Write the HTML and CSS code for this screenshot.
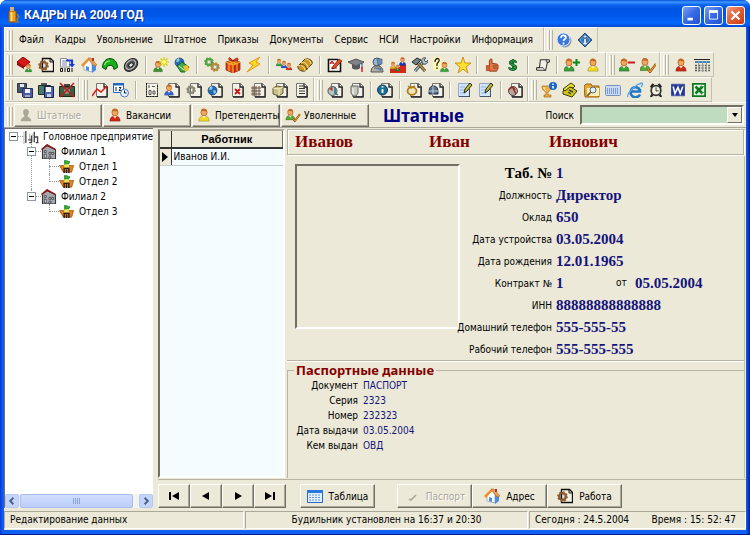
FILE: index.html
```html
<!DOCTYPE html>
<html lang="ru">
<head>
<meta charset="utf-8">
<title>КАДРЫ НА 2004 ГОД</title>
<link rel="stylesheet" href="styles.css">
</head>
<body>
<svg class="sprite" aria-hidden="true">
  <symbol id="doc" viewBox="0 0 16 16"><path d="M4.500 1.500h8l3 3v10h-11z" fill="#f4f1e6" stroke="#777"/><path d="M12 1.500v3.500h3.500M15 5v10H5" fill="none" stroke="#222" stroke-width="1.300"/></symbol>
  <symbol id="person" viewBox="0 0 16 16"><path d="M2 15c0-4 2-6 6-6s6 2 6 6z" fill="currentColor" stroke="#00000060" stroke-width=".6"/><path d="M6 9l2 3 2-3z" fill="#fff3d0"/><ellipse cx="8" cy="5" rx="3.500" ry="4" fill="#f2a860" stroke="#a8581c" stroke-width=".8"/><path d="M4.500 4C5 1 7 .7 8.500 1c2 .2 3 1.500 3 3C9 4 7 2.500 4.500 4z" fill="#c46a20"/></symbol>
  <symbol id="person-off" viewBox="0 0 16 16"><path d="M2 15c0-3 2-4 4-5V8C4 6 4 1 8 1s4 5 2 7v2c2 1 4 2 4 5z" fill="#aca899"/></symbol>
  <symbol id="gear" viewBox="0 0 16 16"><circle cx="8" cy="8" r="5" fill="none" stroke="currentColor" stroke-width="3"/><circle cx="8" cy="8" r="6.800" fill="none" stroke="currentColor" stroke-width="2" stroke-dasharray="2.600 2.700"/><circle cx="8" cy="8" r="3" fill="none" stroke="#0008" stroke-width=".8"/></symbol>
  <symbol id="globe" viewBox="0 0 16 16"><circle cx="8" cy="8" r="6.500" fill="#2469b8" stroke="#123a70"/><path d="M4 4c3-3 5-1 4 1S4 8 3 7zM9 8c3-1 5 0 4 3s-4 2-4-3z" fill="#7bc8d8"/><path d="M4 4l3-2" stroke="#fff"/></symbol>
  <symbol id="people-book" viewBox="0 0 16 16"><path d="M0 5l6-5 7 5-6 5z" fill="#d81818" stroke="#800"/><path d="M0 5v3l7 4v-2z" fill="#9a0c0c"/><use href="#person" x="7" y="6" width="9" height="10" color="#38a038"/></symbol>
  <symbol id="gear-doc" viewBox="0 0 16 16"><path d="M4.500 1.500h8l3 3v10h-11z" fill="#f4f1e6" stroke="#111" stroke-width="1.300"/><path d="M12 1.500V5h3.500" fill="none" stroke="#111"/><use href="#gear" x="0" y="3" width="11" height="11" color="#8b5a2b"/></symbol>
  <symbol id="gear-doc-gray" viewBox="0 0 16 16"><use href="#doc" width="16" height="16"/><use href="#gear" x="0" y="3" width="10" height="10" color="#8f8a78"/></symbol>
  <symbol id="binary" viewBox="0 0 16 16"><path d="M1.500 1.500h6l3 3V10h-9z" fill="#fff" stroke="#889"/><path d="M3 4h4M3 6h5M3 8h5" stroke="#78a"/><path d="M7 3.500h6V8" fill="none" stroke="#1438d0" stroke-width="2.200"/><path d="M10 7h6l-3 3.500z" fill="#1438d0"/><path d="M1.500 11.500h2v3h-2zM6 11v4M8.500 11.500h2v3h-2zM13 11v4" fill="none" stroke="#111"/></symbol>
  <symbol id="house" viewBox="0 0 16 16"><path d="M3 8l5-5 3 4v8l-8-2z" fill="#fff" stroke="#89a" stroke-width=".7"/><path d="M11 7l4 1v5l-4 3z" fill="#4a8de0"/><path d="M0 8l7-7 2 1-7 8z" fill="#f09030"/><path d="M7 1h3l6 7-3 1z" fill="#f0a050" stroke="#a85810" stroke-width=".5"/><path d="M5 9l3 1v4l-3-1z" fill="#4a8de0"/><path d="M11 1h2v3h-2z" fill="#a33"/></symbol>
  <symbol id="handset" viewBox="0 0 16 16"><path d="M.5 10.500C.5 5 4 1.500 8 1.500s7.500 3.500 7.500 9L12 12.500l-1-3c-1-1.500-5-1.500-6 0l-1 3z" fill="#18b018" stroke="#064c06"/><path d="M2.500 8c1-3 3-4 5.500-4" stroke="#90f090" fill="none" stroke-width="1.200"/></symbol>
  <symbol id="ring" viewBox="0 0 16 16"><g transform="rotate(-40 8 8)"><ellipse cx="8" cy="8" rx="7.500" ry="5.500" fill="#555" stroke="#222"/><ellipse cx="8" cy="7.500" rx="5.500" ry="3.800" fill="none" stroke="#ccc"/><ellipse cx="8" cy="8" rx="2.500" ry="1.700" fill="#eee" stroke="#222"/></g></symbol>
  <symbol id="person-star" viewBox="0 0 16 16"><use href="#person" x="-1" y="3" width="12" height="13" color="#38922c"/><path d="M11 0v10M6 5h10M7.500 1.500l7 7M14.500 1.500l-7 7" stroke="#d8c800" stroke-width="1.200"/><circle cx="11" cy="5" r="2" fill="#ffff60"/></symbol>
  <symbol id="globe-hand" viewBox="0 0 16 16"><use href="#globe" width="11" height="11"/><path d="M3 9l5-4 7 5-4 5H7z" fill="#40a850" stroke="#145a24"/><path d="M9 9l5-1 1 5-4 2z" fill="#f0c030"/><path d="M5 9l5 4" stroke="#c0f0d0"/></symbol>
  <symbol id="gears" viewBox="0 0 16 16"><use href="#gear" width="10" height="10" color="#48a838"/><use href="#gear" x="6" y="5" width="10" height="10" color="#b58c30"/></symbol>
  <symbol id="gift" viewBox="0 0 16 16"><path d="M1 5l7-2 7 2v8l-7 3-7-3z" fill="#e04020" stroke="#802010" stroke-width=".7"/><path d="M8 8v8l7-3V5z" fill="#b82c14"/><path d="M1 5l7 3 7-3M8 8v8M4 4l8 3v7M12 4L4 7v7" fill="none" stroke="#f8b020" stroke-width="1.200"/><path d="M8 4C3 4 3 0 5 1l3 3c3-4 6-3 5-1-1 1-3 1-5 1z" fill="#e84820" stroke="#982010"/></symbol>
  <symbol id="bolt" viewBox="0 0 16 16"><path d="M14 0L3 6l4 2-6 7 13-8-4-2z" fill="#ffd820" stroke="#e08800" stroke-width=".8"/></symbol>
  <symbol id="team" viewBox="0 0 16 16"><use href="#person" x="-1" y="0" width="8" height="11" color="#30a030"/><use href="#person" x="4" y="2" width="8" height="11" color="#2450d0"/><use href="#person" x="9" y="4" width="8" height="11" color="#d83018"/></symbol>
  <symbol id="cards" viewBox="0 0 16 16"><path d="M1 9l7-7c5-1 8 2 7 5l-7 7c-4 1-8-2-7-5z" fill="#c8982c" stroke="#5a3c08"/><path d="M1 9c3-2 7 1 7 5M4 6c3-2 7 1 7 5M8 2c3 0 6 2 6 5" fill="none" stroke="#ffe890"/><path d="M3 8c3-2 6 1 7 5" fill="none" stroke="#704c10"/></symbol>
  <symbol id="doc-pen-red" viewBox="0 0 16 16"><path d="M2.500 2.500h9l3 3v9h-12z" fill="#fff" stroke="#111" stroke-width="1.600"/><path d="M4 7l2-3 2 3M4 6h4M5 11h6" stroke="#c00" fill="none"/><path d="M7 9l6-7 3 2-7 7-3 1z" fill="#d85028" stroke="#701808" stroke-width=".7"/></symbol>
  <symbol id="cap" viewBox="0 0 16 16"><path d="M0 5l8-3 8 3-8 4z" fill="#808488" stroke="#333" stroke-width=".7"/><path d="M4 7v4c2 2 6 2 8 0V7L8 9z" fill="#55585c"/><path d="M14 6v6" stroke="#24c"/><path d="M14 10v5" stroke="#d22" stroke-width="1.500"/></symbol>
  <symbol id="agent" viewBox="0 0 16 16"><circle cx="8" cy="5" r="4" fill="#9db8cc" stroke="#456"/><path d="M2 15c0-5 3-6 6-6 4 0 6 2 6 6z" fill="#b0b0a4" stroke="#555"/><path d="M8 2h5v5l-4 1zM5 11h7v3" fill="#668fbd" stroke="#456" stroke-width=".6"/></symbol>
  <symbol id="ranks" viewBox="0 0 16 16"><path d="M0 16v-4h5V10h5V8h6v8z" fill="#d82818"/><use href="#person" x="-1" y="4" width="8" height="9" color="#e0a010"/><use href="#person" x="4" y="7" width="7" height="8" color="#208830"/><use href="#person" x="8" y="-1" width="9" height="11" color="#1838b8"/></symbol>
  <symbol id="tools" viewBox="0 0 16 16"><path d="M3 14L12 4" stroke="#333" stroke-width="3"/><path d="M3 14L12 4" stroke="#9cc4d0" stroke-width="1.500"/><path d="M4 4l9 10" stroke="#444" stroke-width="3"/><path d="M6 6l7 8" stroke="#c89038" stroke-width="1.500"/><path d="M0 5l5-4 4 2-5 5z" fill="#6c8490" stroke="#222"/><path d="M10 5c-1-3 1-5 4-4l-2 2 2 2 2-2c0 3-2 5-5 4z" fill="#a8c4cc" stroke="#222" stroke-width=".7"/></symbol>
  <symbol id="person-ask" viewBox="0 0 16 16"><rect x="0" y="0" width="8" height="13" rx="2" fill="#fff8b0"/><path d="M2 5c0-5 5-4 4-1L4 7v2M4 10.500v1.500" fill="none" stroke="#222" stroke-width="1.300"/><use href="#person" x="6" y="4" width="11" height="12" color="#38a038"/></symbol>
  <symbol id="star" viewBox="0 0 16 16"><path d="M8 0l2 6h6l-5 4 2 6-5-4-5 4 2-6-5-4h6z" fill="#ffe030" stroke="#c08000" stroke-width=".8"/></symbol>
  <symbol id="thumb" viewBox="0 0 16 16"><path d="M5 8V3c1-3 4-2 3 0v3l6 1c2 1 1 7-1 8H5z" fill="#e07848" stroke="#8c3010"/><path d="M9 9h5M9 11.500h5" stroke="#943818"/><path d="M1 8h4v7H1z" fill="#c86038"/></symbol>
  <symbol id="dollar" viewBox="0 0 16 16"><path d="M12 5c0-4-8-3-8 0 0 4 8 2 8 6 0 4-9 4-9 0M8 0v16" fill="none" stroke="#0c3c14" stroke-width="3"/><path d="M12 5c0-4-8-3-8 0 0 4 8 2 8 6 0 4-9 4-9 0M8 0v16" fill="none" stroke="#20a040" stroke-width="1.400"/></symbol>
  <symbol id="scroll" viewBox="0 0 16 16"><path d="M5 2h9c2 0 2 3 0 3h-1l-2 9H2c-2 0-2-3 0-3h2z" fill="#f4f0e4" stroke="#333" stroke-width="1.200"/><path d="M13 2c-2 0-2 3 0 3M4 11h4c1 1 1 3 3 3" fill="none" stroke="#333"/></symbol>
  <symbol id="person-add" viewBox="0 0 16 16"><use href="#person" x="-2" y="1" width="14" height="14" color="#38a038"/><path d="M12.500 2v7M9 5.500h7" stroke="#0a8a1a" stroke-width="2"/></symbol>
  <symbol id="person-del" viewBox="0 0 16 16"><use href="#person" x="-2" y="1" width="14" height="14" color="#38a038"/><path d="M9 5.500h7" stroke="#d01818" stroke-width="2"/></symbol>
  <symbol id="person-mark" viewBox="0 0 16 16"><use href="#person" x="-2" y="0" width="14" height="15" color="#58a838"/><path d="M8 12l2 3 6-8" fill="none" stroke="#8a4810" stroke-width="2.200"/><path d="M8 12l2 3 6-8" fill="none" stroke="#ffb020" stroke-width="1"/></symbol>
  <symbol id="table" viewBox="0 0 16 16"><path d="M0 2.500h16" stroke="#222"/><path d="M1 5h15" stroke="#48b" stroke-width="2" stroke-dasharray="3 1"/><path d="M1 8.500h15M1 11h15M1 13.500h15" stroke="#555" stroke-width="1.300" stroke-dasharray="2 1.300"/><path d="M4.500 4v11M8.500 4v11M12.500 4v11" stroke="#999"/></symbol>
  <symbol id="floppy" viewBox="0 0 16 16"><path d="M.5 1.500h9v9h-9z" fill="#48586c" stroke="#334"/><path d="M3 2h4v3H3z" fill="#e8e8e8"/><path d="M5.500 6.500h10v9h-9l-1-1z" fill="#4c5ca4" stroke="#26305c"/><path d="M8 7h5v4H8z" fill="#f4f4f4"/><path d="M8 13h5v2H8z" fill="#aab"/></symbol>
  <symbol id="floppy-case" viewBox="0 0 16 16"><path d="M.5 3.500h12v9H.5z" fill="#4c7868" stroke="#1c3428"/><path d="M3 1h6v2H3z" fill="#555"/><path d="M6.500 4.500h9v11h-9z" fill="#5068b0" stroke="#16204c"/><path d="M8 5h5v5H8z" fill="#f4f4f4"/><path d="M9 12h4v3H9z" fill="#ccd"/></symbol>
  <symbol id="case-del" viewBox="0 0 16 16"><path d="M.5 4.500h15v10H.5z" fill="#3c5c44" stroke="#182c1c"/><path d="M5 2h6v2H5z" fill="#444"/><circle cx="8" cy="9" r="3" fill="#8a9a88"/><path d="M1 1l14 14M15 1L1 15" stroke="#c01818" stroke-width="1.500"/></symbol>
  <symbol id="doc-graph" viewBox="0 0 16 16"><use href="#doc" width="16" height="16"/><path d="M0 14l5-7 4 3 6-6" fill="none" stroke="#e01818" stroke-width="1.500"/></symbol>
  <symbol id="calendar" viewBox="0 0 16 16"><path d="M.5 1.500h10v9H.5z" fill="#fff" stroke="#2468c0"/><path d="M0 1h11v2.500H0z" fill="#2468c0"/><path d="M3 5v4M6 5.500h2L6 8.500h3" fill="none" stroke="#124"/><circle cx="11.500" cy="11" r="4" fill="#e4f0ff" stroke="#5878b8"/><path d="M11.500 8.500V11h2" fill="none" stroke="#124"/></symbol>
  <symbol id="doc-code" viewBox="0 0 16 16"><path d="M3.500 1.500h11v13h-11z" fill="#f4f1e6" stroke="#999"/><path d="M3.500 1v14M14.500 3v12M4 14.500h11" stroke="#222" stroke-dasharray="2 .6"/><path d="M6 3v3M9 4.500h3M6 8.500h2v4H6zM10 9h2v3h-2z" stroke="#555" fill="none"/></symbol>
  <symbol id="doc-person" viewBox="0 0 16 16"><use href="#doc" width="16" height="16"/><use href="#person" x="-1" y="1" width="12" height="14" color="#3464d0"/></symbol>
  <symbol id="doc-globe" viewBox="0 0 16 16"><use href="#doc" width="16" height="16"/><use href="#globe" x="0" y="3" width="11" height="11"/></symbol>
  <symbol id="doc-del" viewBox="0 0 16 16"><use href="#doc" x="-1" width="16" height="16"/><path d="M6 7l5 5M11 7l-5 5" stroke="#c81818" stroke-width="1.800"/></symbol>
  <symbol id="doc-grid" viewBox="0 0 16 16"><use href="#doc" width="16" height="16"/><path d="M1 6h10M1 9h10M1 12h10M3 4v10M6 4v10M9 4v10" stroke="#6a5440"/></symbol>
  <symbol id="doc-cube" viewBox="0 0 16 16"><use href="#doc" width="16" height="16"/><path d="M1 6l4-2 6 1v6l-4 3-6-2z" fill="#c8c088" stroke="#665c30"/><path d="M1 6l6 1 4-2M7 7v7" fill="none" stroke="#f4f0c8"/></symbol>
  <symbol id="doc-text" viewBox="0 0 16 16"><use href="#doc" x="-1" width="16" height="16"/><path d="M6 4h4M6 6.500h6M6 9h6M6 11.500h6" stroke="#333"/></symbol>
  <symbol id="doc-chart" viewBox="0 0 16 16"><use href="#doc" width="16" height="16"/><circle cx="5.500" cy="9" r="4.500" fill="#b8c8c0" stroke="#455"/><path d="M5.500 9V4.500L2 7z" fill="#c03030"/><path d="M8 5v6l3 2" stroke="#287080" fill="none" stroke-width="1.500"/></symbol>
  <symbol id="doc-cup" viewBox="0 0 16 16"><use href="#doc" width="16" height="16"/><path d="M3 4h7v7l-2 3H5l-2-3z" fill="#c8c8c0" stroke="#666"/><path d="M5 6v6" stroke="#fff"/></symbol>
  <symbol id="doc-info" viewBox="0 0 16 16"><use href="#doc" width="16" height="16"/><circle cx="5.500" cy="8" r="5" fill="#187098" stroke="#0c3c58"/><path d="M5.500 4v1.500M5.500 7v4" stroke="#fff" stroke-width="1.800"/></symbol>
  <symbol id="doc-ring" viewBox="0 0 16 16"><use href="#doc" width="16" height="16"/><ellipse cx="6" cy="9" rx="4.500" ry="3.800" fill="#eee4b8" stroke="#b07818" stroke-width="1.800"/><path d="M2 4l3 2 4-2" stroke="#b07818" fill="none" stroke-width="1.500"/></symbol>
  <symbol id="doc-bell" viewBox="0 0 16 16"><use href="#doc" width="16" height="16"/><path d="M1 12c0-6 1-8 4.500-8S10 6 10 12z" fill="#58708c" stroke="#1c2c40"/><path d="M1 9h9M5 4v9" stroke="#c0d0e0"/></symbol>
  <symbol id="doc-pencil" viewBox="0 0 16 16"><path d="M1.500 1.500h11v13h-11z" fill="#d0e4fc" stroke="#98a8c8"/><path d="M3 5h5M3 8h4M3 11h5" stroke="#98b4dc"/><path d="M12.500 15V7M2 14.500h11" stroke="#456"/><path d="M7 11l1-4 5-6 2 2-5 6z" fill="#c8c020" stroke="#222"/></symbol>
  <symbol id="doc-red" viewBox="0 0 16 16"><use href="#doc" width="16" height="16"/><circle cx="6" cy="9" r="4.500" fill="#b8a8a0" stroke="#544"/><path d="M2 8c2-4 5-3 6 0M6 6l3 6" fill="none" stroke="#983030" stroke-width="1.600"/></symbol>
  <symbol id="trophy" viewBox="0 0 16 16"><path d="M1 4h10c0 4-3 5-4 6v3h3v2H3v-2h2v-3C3 9 1 8 1 4z" fill="#f0b048" stroke="#a06818" stroke-width=".7"/><path d="M3 5c0 2 1 3 2 4" stroke="#fff0b0" fill="none"/><circle cx="12" cy="4" r="4" fill="#1868c8"/><path d="M12 1.500V3M12 4v2.500" stroke="#fff" stroke-width="1.500"/></symbol>
  <symbol id="phone" viewBox="0 0 16 16"><path d="M1 9l6-5 8 5-5 6-9-3z" fill="#d0c818" stroke="#3c3800"/><path d="M1 7l8-6 4 3-2 2-3-1-5 4z" fill="#e8e030" stroke="#3c3800"/><path d="M7 8l4 2M6 10l3 2" stroke="#444" stroke-width="1.500"/></symbol>
  <symbol id="folder-find" viewBox="0 0 16 16"><path d="M0 4l2-2h5l1 2h7v11H1z" fill="#e4a838" stroke="#98600c"/><path d="M3 6h12v8H3z" fill="#fff0b8"/><circle cx="9" cy="8" r="3" fill="#d8f0ff" stroke="#667"/><path d="M7 10l-4 4" stroke="#864" stroke-width="1.800"/></symbol>
  <symbol id="keyboard" viewBox="0 0 16 16"><rect x=".5" y="3.500" width="15" height="10" rx="1" fill="#c8daf4" stroke="#7890c0"/><path d="M2 7h12M2 9h12M2 11h12" stroke="#3858a8" stroke-dasharray="1 1"/></symbol>
  <symbol id="browser" viewBox="0 0 16 16"><path d="M13 12.500A5 5 0 1 1 13 8v1.500H4" fill="none" stroke="#2078c8" stroke-width="2.600"/><path d="M1 15c-2-3 8-13 14-14 1 1 0 3-1 4" fill="none" stroke="#58a8e8" stroke-width="1.300"/></symbol>
  <symbol id="clock" viewBox="0 0 16 16"><path d="M2 5l3-4M14 5l-3-4M4 13l-2 3M12 13l2 3" stroke="#222" stroke-width="2.500"/><circle cx="8" cy="8.500" r="5.500" fill="#f8f4e0" stroke="#333" stroke-width="2"/><path d="M8 5v4h3" fill="none" stroke="#222"/></symbol>
  <symbol id="word" viewBox="0 0 16 16"><path d="M.5 1.500h15v13H.5z" fill="#fff" stroke="#1c2c84"/><path d="M1 2h14v12H1z" fill="#24389c"/><path d="M2.500 4l2 8L8 5l2.500 7L13.500 4" fill="none" stroke="#fff" stroke-width="1.800"/></symbol>
  <symbol id="excel" viewBox="0 0 16 16"><path d="M0 0h16v16H0z" fill="#107820"/><path d="M2 2h12v12H2z" fill="#e8f8e8"/><path d="M4 4l8 8M12 4l-8 8" stroke="#107820" stroke-width="3"/><path d="M9 4h5M10 11h4" stroke="#38a048"/></symbol>
  <symbol id="help" viewBox="0 0 16 16"><circle cx="9" cy="9" r="6.500" fill="#8a9ab4"/><circle cx="7.500" cy="7.500" r="6.500" fill="#3c78d8" stroke="#d8e4fc"/><path d="M5 6c0-4 5-3 5-.5C10 7 7.500 7 7.500 9M7.500 10.500v2" fill="none" stroke="#fff" stroke-width="1.700"/></symbol>
  <symbol id="about" viewBox="0 0 16 16"><path d="M8 1l7 7-7 7-7-7z" fill="#3c74b0" stroke="#24487c"/><path d="M8 3l5 5-5 5-5-5z" fill="none" stroke="#8cb4dc" stroke-width=".7"/><path d="M8 4v1.500M8 7v4.500M6.500 11.500h3" stroke="#fff" stroke-width="1.500"/></symbol>
  <symbol id="city" viewBox="0 0 16 16"><path d="M2.500 15V2M5 11.500h3M8.500 15V7M6 14.500h3M11.500 14V3M11 8.500h4V15M13 14.500h3" fill="none" stroke="#444" stroke-width="1.400"/><path d="M.5 3v13M6.500 5v6M10 5v9" stroke="#aaa"/></symbol>
  <symbol id="branch" viewBox="0 0 16 16"><path d="M1 5l5-3 9 4v10H1z" fill="#a4a8b0" stroke="#222"/><path d="M0 6l6-5 9 5" fill="none" stroke="#901818" stroke-width="1.800"/><path d="M3 7h2v2H3zM3 11h2v4H3zM8 9h2v2H8zM11 9h2v2h-2zM8 13h2v2H8z" fill="#eee" stroke="#222" stroke-width=".7"/></symbol>
  <symbol id="dept" viewBox="0 0 16 16"><path d="M0 7h15l-2 7H4z" fill="#e88020" stroke="#8c4408" stroke-width=".7"/><path d="M5 5h5v4H5z" fill="#e4e860"/><path d="M5.500 1v5M6 2c2-1 3 1 5 1l-1 2H6z" stroke="#289028" fill="#38b038"/><path d="M5 15v-5h5v5M7.500 11v4" fill="none" stroke="#222" stroke-width="1.500"/></symbol>
  <symbol id="grid-blue" viewBox="0 0 16 16"><path d="M.5 2.500h15v12H.5z" fill="#e4f0ff" stroke="#2868c8"/><path d="M0 2h16v3H0z" fill="#2878e0"/><path d="M2 7h12M2 9.500h12M2 12h12" stroke="#6498dc" stroke-dasharray="2 1"/></symbol>
  <symbol id="app" viewBox="0 0 16 16"><path d="M4 4h7v11H4z" fill="#f0a020" stroke="#985008"/><path d="M5 0h4v4H5z" fill="#d0b080"/><path d="M6.500 5v9" stroke="#fff090" stroke-width="1.500"/><path d="M12 7l2 3-2 2 1 3h-3" fill="none" stroke="#8a7c50" stroke-width="1.500"/></symbol>
</svg>

<div class="window">
  <header class="titlebar">
    <svg class="icon"><use href="#app"/></svg>
    <h1>КАДРЫ НА 2004 ГОД</h1>
    <div class="controls">
      <button class="wbtn" aria-label="Свернуть"><svg viewBox="0 0 19 19"><path d="M5 13.500h6" stroke="#fff" stroke-width="3"/></svg></button>
      <button class="wbtn" aria-label="Развернуть"><svg viewBox="0 0 19 19"><path d="M5 5.500h9v8H5z" fill="none" stroke="#fff"/><path d="M4.500 5h10" stroke="#fff" stroke-width="3"/></svg></button>
      <button class="wbtn close" aria-label="Закрыть"><svg viewBox="0 0 19 19"><path d="M5 5l9 9M14 5l-9 9" stroke="#fff" stroke-width="2.300"/></svg></button>
    </div>
  </header>

  <div class="client">
    <div class="bar">
      <nav class="band menu">
        <a href="#">Файл</a><a href="#">Кадры</a><a href="#">Увольнение</a><a href="#">Штатное</a><a href="#">Приказы</a><a href="#">Документы</a><a href="#">Сервис</a><a href="#">НСИ</a><a href="#">Настройки</a><a href="#">Информация</a>
      </nav>
      <div class="band">
        <button class="tool"><svg><use href="#help"/></svg></button>
        <button class="tool"><svg><use href="#about"/></svg></button>
      </div>
    </div>

    <div class="bar">
      <div class="band w-staff">
        <button class="tool"><svg><use href="#people-book"/></svg></button>
        <button class="tool"><svg><use href="#gear-doc"/></svg></button>
        <button class="tool"><svg><use href="#binary"/></svg></button>
        <button class="tool"><svg><use href="#house"/></svg></button>
        <button class="tool"><svg><use href="#handset"/></svg></button>
        <button class="tool"><svg><use href="#ring"/></svg></button>
        <i class="sep"></i>
        <button class="tool"><svg><use href="#person-star"/></svg></button>
        <button class="tool"><svg><use href="#globe-hand"/></svg></button>
        <i class="sep"></i>
        <button class="tool"><svg><use href="#gears"/></svg></button>
        <button class="tool"><svg><use href="#gift"/></svg></button>
        <button class="tool"><svg><use href="#bolt"/></svg></button>
        <i class="sep"></i>
        <button class="tool"><svg><use href="#team"/></svg></button>
        <button class="tool"><svg><use href="#cards"/></svg></button>
        <i class="sep"></i>
        <button class="tool"><svg><use href="#doc-pen-red"/></svg></button>
        <button class="tool"><svg><use href="#cap"/></svg></button>
        <button class="tool"><svg><use href="#agent"/></svg></button>
        <button class="tool"><svg><use href="#ranks"/></svg></button>
        <button class="tool"><svg><use href="#tools"/></svg></button>
        <button class="tool"><svg><use href="#person-ask"/></svg></button>
        <button class="tool"><svg><use href="#star"/></svg></button>
        <i class="sep"></i>
        <button class="tool"><svg class="slim"><use href="#thumb"/></svg></button>
        <button class="tool"><svg class="small"><use href="#dollar"/></svg></button>
        <i class="sep"></i>
        <button class="tool"><svg class="slim"><use href="#scroll"/></svg></button>
        <i class="sep"></i>
        <button class="tool"><svg><use href="#person-add"/></svg></button>
        <button class="tool yellow"><svg class="slim"><use href="#person"/></svg></button>
      </div>
      <div class="band">
        <button class="tool"><svg><use href="#person-del"/></svg></button>
        <button class="tool"><svg><use href="#person-mark"/></svg></button>
      </div>
      <div class="band">
        <button class="tool red"><svg class="slim"><use href="#person"/></svg></button>
        <button class="tool"><svg><use href="#table"/></svg></button>
      </div>
    </div>

    <div class="bar">
      <div class="band">
        <button class="tool"><svg><use href="#floppy"/></svg></button>
        <button class="tool"><svg><use href="#floppy-case"/></svg></button>
        <button class="tool"><svg><use href="#case-del"/></svg></button>
      </div>
      <div class="band w-docs">
        <button class="tool"><svg><use href="#doc-graph"/></svg></button>
        <button class="tool"><svg><use href="#calendar"/></svg></button>
        <i class="sep"></i>
        <button class="tool"><svg><use href="#doc-code"/></svg></button>
        <button class="tool"><svg><use href="#doc-person"/></svg></button>
        <button class="tool"><svg><use href="#gear-doc-gray"/></svg></button>
        <button class="tool"><svg><use href="#doc-globe"/></svg></button>
        <button class="tool"><svg><use href="#doc-del"/></svg></button>
        <button class="tool"><svg><use href="#doc-grid"/></svg></button>
        <button class="tool"><svg><use href="#doc-cube"/></svg></button>
        <button class="tool"><svg><use href="#doc-text"/></svg></button>
      </div>
      <div class="band w-orders">
        <button class="tool"><svg><use href="#doc-chart"/></svg></button>
        <button class="tool"><svg><use href="#doc-cup"/></svg></button>
        <i class="sep"></i>
        <button class="tool"><svg><use href="#doc-info"/></svg></button>
        <i class="sep"></i>
        <button class="tool"><svg><use href="#doc-ring"/></svg></button>
        <button class="tool"><svg><use href="#doc-bell"/></svg></button>
        <i class="sep"></i>
        <button class="tool"><svg><use href="#doc-pencil"/></svg></button>
        <button class="tool"><svg><use href="#doc-pencil"/></svg></button>
        <i class="sep"></i>
        <button class="tool"><svg><use href="#doc-red"/></svg></button>
      </div>
      <div class="band w-extra">
        <button class="tool"><svg><use href="#trophy"/></svg></button>
        <button class="tool"><svg><use href="#phone"/></svg></button>
        <button class="tool"><svg><use href="#folder-find"/></svg></button>
        <button class="tool"><svg><use href="#keyboard"/></svg></button>
        <button class="tool"><svg><use href="#browser"/></svg></button>
        <button class="tool"><svg class="slim"><use href="#clock"/></svg></button>
        <button class="tool"><svg class="slim"><use href="#word"/></svg></button>
        <button class="tool"><svg class="slim"><use href="#excel"/></svg></button>
      </div>
    </div>

    <div class="bar views">
      <div class="tabs">
        <button class="push" disabled><svg class="icon"><use href="#person-off"/></svg>Штатные</button>
        <button class="push"><svg class="icon red"><use href="#person"/></svg>Вакансии</button>
        <button class="push"><svg class="icon yellow"><use href="#person"/></svg>Претенденты</button>
        <button class="push"><svg class="icon"><use href="#person-mark"/></svg>Уволенные</button>
      </div>
      <h2>Штатные</h2>
      <label for="search">Поиск</label>
      <div class="combo">
        <select id="search"><option></option></select>
        <span class="drop" aria-hidden="true"></span>
      </div>
    </div>

    <main>
      <aside class="tree-pane">
        <ul class="tree">
          <li><div class="node"><button class="fold" aria-label="Свернуть ветвь"></button><svg class="icon"><use href="#city"/></svg><span>Головное предприятие</span></div>
            <ul>
              <li><div class="node"><button class="fold" aria-label="Свернуть ветвь"></button><svg class="icon"><use href="#branch"/></svg><span>Филиал 1</span></div>
                <ul>
                  <li><div class="node leaf"><svg class="icon"><use href="#dept"/></svg><span>Отдел 1</span></div></li>
                  <li><div class="node leaf"><svg class="icon"><use href="#dept"/></svg><span>Отдел 2</span></div></li>
                </ul>
              </li>
              <li><div class="node"><button class="fold" aria-label="Свернуть ветвь"></button><svg class="icon"><use href="#branch"/></svg><span>Филиал 2</span></div>
                <ul>
                  <li><div class="node leaf"><svg class="icon"><use href="#dept"/></svg><span>Отдел 3</span></div></li>
                </ul>
              </li>
            </ul>
          </li>
        </ul>
        <div class="scroll">
          <button aria-label="Влево"><svg viewBox="0 0 13 13"><path d="M8 3L4.500 6.500 8 10" fill="none" stroke="#4d6185" stroke-width="2"/></svg></button>
          <div class="thumb"><i></i></div>
          <button aria-label="Вправо"><svg viewBox="0 0 13 13"><path d="M5 3l3.500 3.500L5 10" fill="none" stroke="#4d6185" stroke-width="2"/></svg></button>
        </div>
      </aside>

      <div class="work">
        <div class="record">
          <div class="list">
            <table>
              <thead><tr><th class="mark"></th><th>Работник</th></tr></thead>
              <tbody><tr><td class="mark"><i></i></td><td>Иванов И.И.</td></tr></tbody>
            </table>
          </div>
          <div class="card">
            <div class="fullname"><span>Иванов</span><span>Иван</span><span>Ивнович</span></div>
            <div class="info">
              <div class="photo"></div>
              <dl class="fields">
                <dt class="strong">Таб. №</dt><dd>1</dd>
                <dt>Должность</dt><dd>Директор</dd>
                <dt>Оклад</dt><dd>650</dd>
                <dt>Дата устройства</dt><dd>03.05.2004</dd>
                <dt>Дата рождения</dt><dd>12.01.1965</dd>
                <dt>Контракт №</dt><dd class="split"><span>1</span><small>от</small><span>05.05.2004</span></dd>
                <dt>ИНН</dt><dd>88888888888888</dd>
                <dt>Домашний телефон</dt><dd>555-555-55</dd>
                <dt>Рабочий телефон</dt><dd>555-555-555</dd>
              </dl>
            </div>
            <fieldset>
              <legend>Паспортные данные</legend>
              <dl class="passport">
                <dt>Документ</dt><dd>ПАСПОРТ</dd>
                <dt>Серия</dt><dd>2323</dd>
                <dt>Номер</dt><dd>232323</dd>
                <dt>Дата выдачи</dt><dd>03.05.2004</dd>
                <dt>Кем выдан</dt><dd>ОВД</dd>
              </dl>
            </fieldset>
          </div>
        </div>
        <div class="actions">
          <div class="group nav">
            <button class="push" aria-label="Первая"><svg viewBox="0 0 12 8"><path d="M2 0v8" stroke="#000" stroke-width="2"/><path d="M11 0v8L4 4z"/></svg></button>
            <button class="push" aria-label="Предыдущая"><svg viewBox="0 0 12 8"><path d="M9 0v8L2 4z"/></svg></button>
            <button class="push" aria-label="Следующая"><svg viewBox="0 0 12 8"><path d="M3 0v8l7-4z"/></svg></button>
            <button class="push" aria-label="Последняя"><svg viewBox="0 0 12 8"><path d="M10 0v8" stroke="#000" stroke-width="2"/><path d="M1 0v8l7-4z"/></svg></button>
          </div>
          <div class="group">
            <button class="push"><svg class="icon"><use href="#grid-blue"/></svg>Таблица</button>
          </div>
          <div class="group">
            <button class="push" disabled><svg class="icon" viewBox="0 0 16 16"><path d="M5 11l2 1 5-5" fill="none" stroke="#aca899" stroke-width="1.500"/></svg>Паспорт</button>
            <button class="push"><svg class="icon"><use href="#house"/></svg>Адрес</button>
            <button class="push"><svg class="icon"><use href="#gear-doc"/></svg>Работа</button>
          </div>
        </div>
      </div>
    </main>

    <footer class="status">
      <span>Редактирование данных</span>
      <span class="center">Будильник установлен на 16:37 и 20:30</span>
      <span class="clock"><span>Сегодня : 24.5.2004</span><span>Время : 15: 52: 47</span></span>
    </footer>
  </div>
</div>
</body>
</html>
```

FILE: styles.css
```css
:root {
  --face: #ece9d8;
  --light: #fffffb;
  --shade: #aca899;
  --dark: #716f64;
  --navy: #14147c;
  --ui: "DejaVu Sans Condensed", "Liberation Sans", Arial, sans-serif;
}

* { box-sizing: border-box; }

body {
  margin: 0;
  background: #fff;
  color: #000;
  font: 10px/15px var(--ui);
}

button, select { font: inherit; color: inherit; margin: 0; padding: 0; }
h1, h2, dl, dd, ul { margin: 0; padding: 0; }
ul { list-style: none; }
a { color: inherit; text-decoration: none; }

.sprite { position: absolute; width: 0; height: 0; }
.icon { width: 16px; height: 16px; flex: none; }
.red { color: #d02818; }
.yellow { color: #f0d820; }

/* Window frame */
.window {
  display: flex;
  flex-direction: column;
  min-height: 100vh;
  padding: 0 4px 4px;
  background: linear-gradient(90deg, #0a36d8, #1060f4 3px, #1060f4 calc(100% - 4px), #001ca0);
  border-bottom: 1px solid #001a90;
  border-radius: 7px 7px 0 0;
}

.titlebar {
  display: flex;
  align-items: center;
  gap: 3px;
  height: 27px;
  margin: 0 -4px;
  padding: 3px 5px 0 5px;
  border-radius: 7px 7px 0 0;
  background: linear-gradient(#0a50d8, #3c96ff 2px, #0a62f0 5px, #0054e4 9px, #0058ec 16px, #0468fc 23px, #0048d0);
}

.titlebar h1 {
  flex: 1;
  color: #fff;
  font: bold 12px/18px Roboto, sans-serif;
  text-shadow: 1px 1px #0a2a80;
}

.controls { display: flex; gap: 3px; }
.wbtn {
  width: 19px;
  height: 19px;
  border: 1px solid #fff;
  border-radius: 3px;
  background: linear-gradient(135deg, #7ca0f4, #3468e4 50%, #2454d0);
}
.wbtn svg { display: block; width: 17px; height: 17px; }
.wbtn.close { background: linear-gradient(135deg, #f0a088, #e05c34 50%, #c83c14); }

.client {
  display: flex;
  flex: 1;
  flex-direction: column;
  background: var(--face);
}

/* Toolbars */
.bar { display: flex; height: 25px; }
.band {
  display: flex;
  align-items: center;
  padding: 0 1px 0 9px;
  border: 1px solid;
  border-color: var(--light) #c4c0b0 #c4c0b0 var(--light);
  background:
    linear-gradient(90deg, var(--light) 1px, transparent 1px 2px, #b8b4a4 2px 3px, transparent 3px) 2px 2px / 3px 20px no-repeat,
    linear-gradient(90deg, var(--light) 1px, transparent 1px 2px, #b8b4a4 2px 3px, transparent 3px) 5px 2px / 3px 20px no-repeat;
}
.menu { gap: 11px; padding: 0 10px 0 14px; }
.w-staff { width: 602px; }
.w-docs { width: 235px; }
.w-orders { width: 214px; }
.w-extra { width: 184px; }
.tool {
  display: flex;
  flex: 1 1 22px;
  min-width: 21px;
  align-items: center;
  justify-content: center;
  height: 21px;
  border: 0;
  background: none;
}
.tool svg { width: 16px; height: 16px; flex: none; }
.tool svg.slim { width: 14px; height: 14px; }
.tool svg.small { width: 12px; height: 12px; }
.sep {
  flex: none;
  width: 2px;
  height: 18px;
  margin: 0 3px;
  border-left: 1px solid #b8b4a4;
  border-right: 1px solid var(--light);
}

.push {
  display: flex;
  align-items: center;
  justify-content: center;
  gap: 4px;
  height: 24px;
  border: 1px solid;
  border-color: var(--light) var(--dark) var(--dark) var(--light);
  box-shadow: inset -1px -1px var(--shade);
  background: var(--face);
  white-space: nowrap;
}
.push:disabled { color: var(--shade); text-shadow: 1px 1px #fff; }

.views { align-items: center; padding-right: 2px; border-top: 1px solid var(--light); }
.tabs {
  display: flex;
  gap: 1px;
  padding-left: 10px;
  background:
    linear-gradient(90deg, var(--light) 1px, transparent 1px 2px, #b8b4a4 2px 3px, transparent 3px) 3px 3px / 3px 19px no-repeat,
    linear-gradient(90deg, var(--light) 1px, transparent 1px 2px, #b8b4a4 2px 3px, transparent 3px) 6px 3px / 3px 19px no-repeat;
}
.tabs .push { width: 88px; height: 23px; gap: 3px; justify-content: flex-start; padding-left: 3px; }
.tabs .icon { height: 14px; }
.views h2 {
  margin-left: 14px;
  color: #000084;
  font: bold 17px/23px "Noto Sans", sans-serif;
}
.views label { margin-left: auto; margin-right: 6px; }
.combo { position: relative; width: 164px; height: 20px; }
.combo select {
  width: 100%;
  height: 100%;
  appearance: none;
  border: 2px solid;
  border-color: var(--dark) var(--light) var(--light) var(--dark);
  border-radius: 0;
  background: #c0dcc0;
}
.drop {
  position: absolute;
  inset: 2px 2px 2px auto;
  display: grid;
  place-items: center;
  width: 15px;
  border: 1px solid;
  border-color: var(--light) var(--dark) var(--dark) var(--light);
  background: var(--face);
  pointer-events: none;
}
.drop::after { content: ""; border: 3px solid transparent; border-top: 4px solid #000; border-bottom: 0; }

/* Work area */
main {
  display: grid;
  flex: 1;
  grid-template-columns: 149px 1fr;
  gap: 5px;
  padding-bottom: 2px;
  border-top: 1px solid var(--shade);
}

.tree-pane {
  display: flex;
  flex-direction: column;
  justify-content: space-between;
  min-width: 0;
  border-top: 1px solid var(--dark);
  border-left: 1px solid var(--dark);
  background: #fff;
}
.tree { padding: 0 0 0 4px; }
.tree ul { margin-left: 18px; }
.tree li { position: relative; }
.node { display: flex; align-items: center; gap: 4px; height: 15px; white-space: nowrap; }
.node .icon { height: 15px; }
.fold {
  position: relative;
  z-index: 1;
  flex: none;
  width: 9px;
  height: 9px;
  margin-right: 1px;
  border: 1px solid #8c96a4;
  background: linear-gradient(#000, #000) center / 5px 1px no-repeat #fff;
}
.leaf { padding-left: 14px; }
.tree li::before {
  content: "";
  position: absolute;
  top: 7px;
  left: 4px;
  width: 10px;
  border-top: 1px dotted #999;
}
.tree ul > li::after {
  content: "";
  position: absolute;
  top: 0;
  bottom: 0;
  left: 4px;
  border-left: 1px dotted #999;
}
.tree ul > li:last-child::after { bottom: auto; height: 8px; }

.scroll { display: flex; gap: 1px; height: 14px; background: #f4f3ee; }
.scroll button {
  width: 14px;
  border: 1px solid #b4c8f4;
  border-radius: 2px;
  background: #c4d4fc;
}
.scroll svg { display: block; width: 12px; height: 12px; }
.thumb {
  display: grid;
  place-items: center;
  width: 113px;
  border: 1px solid #a8bcf0;
  border-radius: 2px;
  background: linear-gradient(#d0defe, #bccdfa);
}
.thumb i { width: 7px; height: 6px; background: repeating-linear-gradient(90deg, #8ca4e0 0 1px, transparent 1px 2px); }
.scroll button:last-child { margin-left: auto; }

.work { display: flex; flex-direction: column; min-width: 0; }
.record { display: flex; flex: 1; gap: 2px; padding: 1px 1px 1px 0; }

.list {
  width: 127px;
  border: 2px solid;
  border-color: var(--shade) var(--light) var(--light) var(--dark);
  background: #f4fcff;
}
.list table { width: 100%; border-collapse: collapse; table-layout: fixed; }
.list tr { height: 17px; }
.list th {
  padding: 0;
  border-right: 1px solid var(--dark);
  border-bottom: 2px solid #333;
  background: var(--face);
  font: bold 11px/15px "Liberation Sans", Arial, sans-serif;
}
.list td { padding: 0 2px; border-bottom: 1px solid #c4ccd0; line-height: 15px; }
.list .mark { width: 11px; border-right: 1px solid #333; background: var(--face); }
.mark i { display: block; width: 0; border: 5px solid transparent; border-left: 6px solid #000; border-right: 0; }

.card { display: flex; flex: 1; flex-direction: column; border-right: 1px solid #c4c0b0; }
.fullname {
  display: grid;
  grid-template-columns: 134px 120px 1fr;
  padding-left: 7px;
  border: 1px solid #b8b4a4;
  box-shadow: 1px 1px var(--light), inset 1px 1px var(--light);
  color: #840000;
  font: bold 17px/24px "Liberation Serif", "Times New Roman", serif;
}
.info {
  display: flex;
  align-items: center;
  padding: 7px 0 0 8px;
  border-bottom: 1px solid #b8b4a4;
  box-shadow: 0 1px var(--light);
}
.photo {
  align-self: flex-start;
  width: 165px;
  height: 165px;
  margin-top: 2px;
  border: 2px solid;
  border-color: var(--dark) var(--light) var(--light) var(--dark);
}
.fields {
  display: grid;
  grid-template-columns: 92px 1fr;
  grid-auto-rows: 22px;
  column-gap: 4px;
  align-items: center;
}
.fields dt { justify-self: end; white-space: nowrap; }
.fields dd, .fields .strong { font: bold 15px/22px "Liberation Serif", "Times New Roman", serif; }
.fields dd { color: var(--navy); }
.split { display: grid; grid-template-columns: 60px 19px 1fr; }
.split small { color: #000; font: 10px/22px var(--ui); }

fieldset {
  flex: 1;
  min-width: 0;
  margin: 2px 0 0;
  padding: 0 0 0 6px;
  border: 0;
  border-top: 1px solid #b8b4a4;
  border-left: 1px solid #b8b4a4;
}
legend {
  padding: 0 2px;
  color: #840000;
  font: bold 13px/15px "Noto Sans", sans-serif;
}
.passport { display: grid; grid-template-columns: 64px 1fr; column-gap: 5px; }
.passport dt { justify-self: end; white-space: nowrap; }
.passport dd { color: var(--navy); }

.actions {
  display: flex;
  padding: 4px 0 0;
  border-top: 1px solid #b8b4a4;
}
.group { display: flex; margin-right: 22px; }
.group .push { width: 75px; gap: 6px; }
.nav { margin-right: 14px; }
.nav .push { width: 32px; }
.nav svg { width: 12px; height: 8px; }

/* Status bar */
.status { display: grid; grid-template-columns: 240px 1fr 217px; gap: 1px; padding: 1px 0; }
.status > span {
  padding: 0 5px;
  border: 1px solid;
  border-color: var(--shade) var(--light) var(--light) var(--shade);
  line-height: 16px;
  white-space: nowrap;
}
.status .center { text-align: center; }
.status .clock { padding-right: 9px; }
.clock { display: flex; justify-content: space-between; }
```
